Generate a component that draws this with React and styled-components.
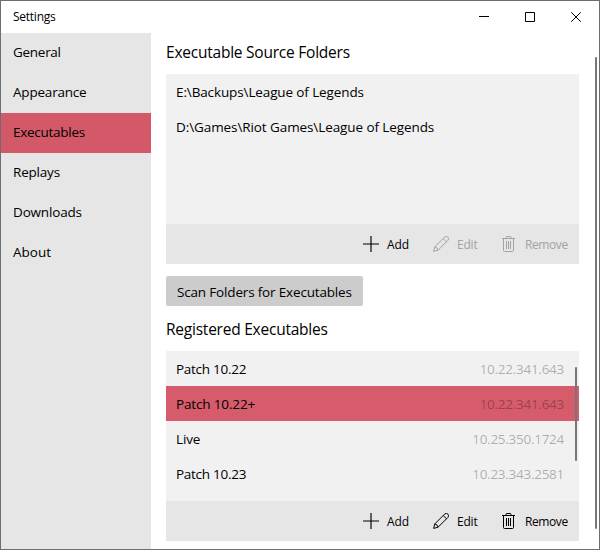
import React from "react";
import styled, { createGlobalStyle } from "styled-components";

const GlobalStyle = createGlobalStyle`
  * { box-sizing: border-box; }
  body { margin: 0; overflow: hidden; background: #fff; }
`;

const Window = styled.div`
  width: 600px;
  height: 550px;
  display: flex;
  flex-direction: column;
  border: 1px solid #6f6d6f;
  background: #fff;
  color: #000;
  font-family: "Open Sans", "Noto Sans", sans-serif;
  font-size: 13.5px;
  white-space: nowrap;
  cursor: default;
`;

const TitleBar = styled.header`
  flex: none;
  height: 32px;
  display: flex;
  align-items: center;
  justify-content: space-between;
  padding-left: 12px;
  font-size: 12px;
  line-height: 32px;
`;

const Controls = styled.div`
  display: flex;
`;

const ControlButton = styled.div`
  width: 46px;
  height: 32px;
  display: flex;
  align-items: center;
  justify-content: center;
`;

const Body = styled.div`
  flex: 1;
  min-height: 0;
  display: flex;
`;

const Sidebar = styled.nav`
  flex: none;
  width: 150px;
  background: #e6e6e6;
`;

const NavItem = styled.div`
  height: 40px;
  padding-left: 12px;
  line-height: 38px;
  background: ${(p) => (p.$active ? "#d35969" : "transparent")};
`;

const Content = styled.main`
  flex: 1;
  position: relative;
  padding-left: 15px;
`;

const Heading = styled.h2`
  margin: 0;
  height: ${(p) => p.$height}px;
  line-height: ${(p) => p.$line}px;
  font-size: 15.5px;
  font-weight: 400;
`;

const Panel = styled.section`
  position: relative;
  width: 413px;
  background: #f1f1f1;
`;

const List = styled.div`
  height: 150px;
`;

const Row = styled.div`
  height: 35px;
  padding: 0 15px 0 10px;
  display: flex;
  justify-content: space-between;
  line-height: 36px;
  background: ${(p) => (p.$active ? "#d65c6c" : "transparent")};
`;

const Label = styled.span`
  letter-spacing: ${(p) => p.$track || 0}px;
`;

const Version = styled(Label)`
  color: rgba(0, 0, 0, 0.3);
`;

const Toolbar = styled.div`
  height: 40px;
  padding-left: 197px;
  display: flex;
  background: #e6e6e6;
  font-size: 12px;
  line-height: 39px;
`;

const Action = styled.div`
  flex: none;
  width: ${(p) => p.$width}px;
  display: flex;
  align-items: center;
  gap: ${(p) => p.$gap || 8}px;
  color: ${(p) => (p.$disabled ? "#a3a3a3" : "#000")};
`;

const ScanButton = styled.button`
  display: block;
  width: 197px;
  height: 30px;
  margin: 12px 0 0;
  padding: 0 0 0 11px;
  border: 0;
  border-radius: 2px;
  background: #cccccc;
  color: #000;
  font: inherit;
  line-height: 32px;
  text-align: left;
`;

const ScrollThumb = styled.div`
  position: absolute;
  top: ${(p) => p.$top}px;
  right: ${(p) => p.$right}px;
  width: 2px;
  height: ${(p) => p.$height}px;
  border-radius: 1px;
  background: #767676;
`;

const Icon = styled.svg`
  flex: none;
  display: block;
  fill: none;
  stroke: currentColor;
`;

const AddIcon = () => (
  <Icon width="16" height="16" viewBox="0 0 16 16">
    <path d="M8 0V16M0 8H16" strokeWidth="1.15" />
  </Icon>
);

const EditIcon = () => (
  <Icon width="16" height="16" viewBox="0 0 16 16" strokeLinejoin="round">
    <path d="M.6 15.4 1.8 10.9 11.6 1.1a2.3 2.3 0 0 1 3.3 3.3L5.1 14.2ZM10.2 2.5 13.5 5.8M1.8 10.9Q4.6 11.4 5.1 14.2" strokeWidth="1" />
  </Icon>
);

const RemoveIcon = () => (
  <Icon width="16" height="16" viewBox="0 0 16 16">
    <path d="M2 2.5H15M6 2.5V1.5Q6 .5 7 .5H10Q11 .5 11 1.5V2.5M3.5 2.5V14.5Q3.5 15.5 4.5 15.5H12.5Q13.5 15.5 13.5 14.5V2.5M6.5 5V13M8.5 5V13M10.5 5V13" />
  </Icon>
);

const PanelToolbar = ({ disabled }) => (
  <Toolbar>
    <Action $width={70}><AddIcon /><Label $track={-0.1}>Add</Label></Action>
    <Action $width={67} $disabled={disabled}><EditIcon /><Label $track={-0.2}>Edit</Label></Action>
    <Action $width={70} $gap={9} $disabled={disabled}><RemoveIcon /><Label $track={-0.4}>Remove</Label></Action>
  </Toolbar>
);

const pages = [
  { name: "General", track: -0.28 },
  { name: "Appearance", track: -0.2 },
  { name: "Executables", track: -0.27, active: true },
  { name: "Replays", track: -0.2 },
  { name: "Downloads", track: -0.17 },
  { name: "About" },
];

const folders = [
  { path: "E:\\Backups\\League of Legends", track: -0.12 },
  { path: "D:\\Games\\Riot Games\\League of Legends", track: -0.09 },
];

const executables = [
  { name: "Patch 10.22", track: -0.27, version: "10.22.341.643" },
  { name: "Patch 10.22+", track: -0.15, version: "10.22.341.643", active: true },
  { name: "Live", track: -0.15, version: "10.25.350.1724" },
  { name: "Patch 10.23", track: -0.27, version: "10.23.343.2581" },
];

export default function App() {
  return (
    <>
      <GlobalStyle />
      <Window>
        <TitleBar>
          <Label $track={-0.25}>Settings</Label>
          <Controls>
            <ControlButton>
              <Icon width="10" height="10"><path d="M0 4.5H10" /></Icon>
            </ControlButton>
            <ControlButton>
              <Icon width="10" height="10"><path d="M.5 .5H9.5V9.5H.5Z" /></Icon>
            </ControlButton>
            <ControlButton>
              <Icon width="10" height="10"><path d="M.2 .2 9.8 9.8M9.8 .2 .2 9.8" /></Icon>
            </ControlButton>
          </Controls>
        </TitleBar>
        <Body>
          <Sidebar>
            {pages.map((p) => (
              <NavItem key={p.name} $active={p.active}>
                <Label $track={p.track}>{p.name}</Label>
              </NavItem>
            ))}
          </Sidebar>
          <Content>
            <Heading $height={41} $line={39}><Label $track={-0.23}>Executable Source Folders</Label></Heading>
            <Panel>
              <List>
                {folders.map((f) => (
                  <Row key={f.path}><Label $track={f.track}>{f.path}</Label></Row>
                ))}
              </List>
              <PanelToolbar disabled />
            </Panel>
            <ScanButton><Label $track={-0.17}>Scan Folders for Executables</Label></ScanButton>
            <Heading $height={45} $line={46}><Label $track={-0.23}>Registered Executables</Label></Heading>
            <Panel>
              <List>
                {executables.map((e) => (
                  <Row key={e.name} $active={e.active}>
                    <Label $track={e.track}>{e.name}</Label>
                    <Version $track={-0.27}>{e.version}</Version>
                  </Row>
                ))}
              </List>
              <PanelToolbar />
              <ScrollThumb $top={16} $right={2} $height={94} />
            </Panel>
            <ScrollThumb $top={24} $right={2} $height={472} />
          </Content>
        </Body>
      </Window>
    </>
  );
}
